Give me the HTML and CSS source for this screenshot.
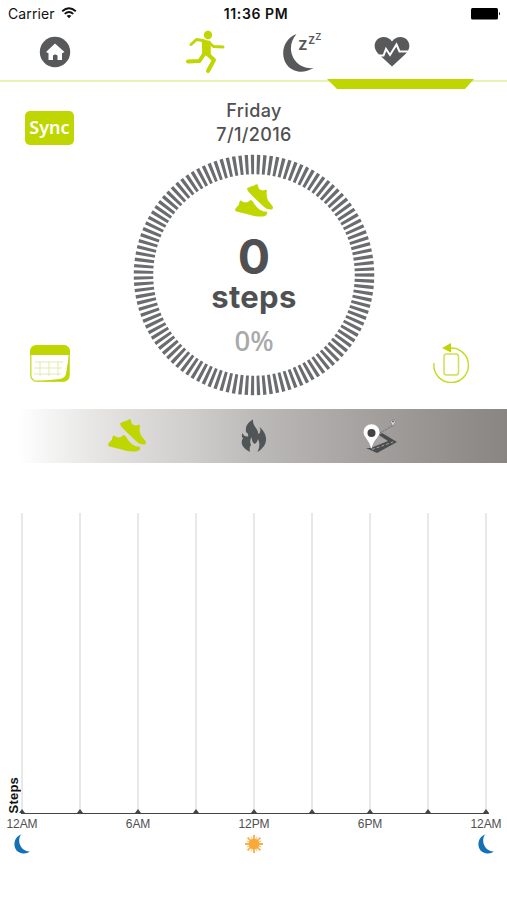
FILE: index.html
```html
<!DOCTYPE html>
<html lang="en">
<head>
    <meta charset="UTF-8">
    <meta name="viewport" content="width=device-width, initial-scale=1.0">
    <title>Steps</title>
    <link rel="stylesheet" href="styles.css">
</head>
<body>
    <!-- shared shapes -->
    <svg class="defs" width="0" height="0">
        <symbol id="shoes" viewBox="0 0 38 34">
            <path d="M12 4.200 L16.500 2.200 Q19 2.200 20.500 .5 L22.500 .3 L24 5 Q27.500 7.500 30.800 5.500 L32 6.500 Q30.800 12 33 16.500 L37.800 22.500 Q38.500 25.500 36 25.600 Q31.500 25.600 28 22 L18 12.500 Q14.500 9 12.800 7 Z"/>
            <path d="M5.500 16.300 Q8.500 19.300 13 18 L15.500 16 L17.500 17 Q20.500 22.500 24.500 25.500 Q27.500 27.800 32 27.800 Q33 30.500 30 32 Q25 33.200 18 31.800 Q10 29.500 1.500 27.500 Q-.5 27 .5 24.500 L4 20.500 Q4 18 5.500 16.300 Z"/>
        </symbol>
        <symbol id="moon" viewBox="0 0 17 20">
            <path d="M7 .5 C-2 4 -1.500 17 7 19 Q12 20.500 16 17.500 C8 18 2 8 7 .5 Z"/>
        </symbol>
    </svg>

    <div class="status">
        <div class="carrier">
            <span>Carrier</span>
            <svg width="16" height="12" viewBox="0 0 16 12">
                <path d="M1.200 4.300 Q8 -1.800 14.800 4.300 M3.700 6.900 Q8 3.200 12.300 6.900" fill="none" stroke="#111" stroke-width="1.900"/>
                <path d="M5.600 8.800 Q8 7 10.400 8.800 L8 11.300 Z" fill="#111"/>
            </svg>
        </div>
        <div class="time">11:36 PM</div>
        <svg class="battery" width="32" height="12" viewBox="0 0 32 12">
            <rect x="0" y="0" width="27" height="11.500" rx="1.500"/>
            <path d="M28 4 Q30 5.700 28 7.500 Z"/>
        </svg>
    </div>

    <nav class="tabs">
        <svg class="home" width="32" height="32" viewBox="0 0 32 32">
            <circle cx="16" cy="16" r="15.200" fill="#58595b"/>
            <path d="M16 7.500 L25.500 16 L23 17.300 V24 H18.500 V19.500 Q16 17.500 14 19.500 V24 H9.500 V17.300 L7 16 Z" fill="#fff"/>
        </svg>
        <svg class="run" width="40" height="44" viewBox="0 0 40 44">
            <circle cx="23" cy="5" r="4.200" fill="#bfd600"/>
            <path d="M18 11 L24.500 12 L24.500 25 L18.500 24 Z" fill="#bfd600" stroke="#bfd600" stroke-width="2.500" stroke-linejoin="round"/>
            <path d="M19 10.800 L11.500 9.500 L6 14.500 M24 12.500 L28.500 16.500 L38 17" fill="none" stroke="#bfd600" stroke-width="3" stroke-linecap="round" stroke-linejoin="round"/>
            <path d="M19 24 L14.500 31 L3 31.500 M22.500 24 L29 30 L23 41" fill="none" stroke="#bfd600" stroke-width="4" stroke-linecap="round" stroke-linejoin="round"/>
        </svg>
        <div class="sleep">
            <svg width="32" height="38" viewBox="0 0 32 38">
                <path d="M13.500 0 C-5 7 -4 34 15 37.500 Q23 38.500 30.500 34 C12 36 .5 15 13.500 0 Z" fill="#58595b"/>
            </svg>
            <span class="z z1">z</span>
            <span class="z z2">z</span>
            <span class="z z3">z</span>
        </div>
        <svg class="heart" width="38" height="32" viewBox="0 0 38 32">
            <path d="M19 30.500 L5 17.500 C-2 10 3 1 10.500 1 Q16 1 19 5.500 Q22 1 27.500 1 C35 1 40 10 33 17.500 Z" fill="#58595b"/>
            <path d="M6 19.500 L10.500 19.500 L13 13 L17 19 L23.500 8.500 L26.500 15.500 L38 15.500" fill="none" stroke="#fff" stroke-width="2"/>
        </svg>
    </nav>

    <div class="divider">
        <svg width="147" height="10" viewBox="0 0 147 10"><path d="M0 0 H147 L138 10 H10 Z" fill="#bfd600"/></svg>
    </div>

    <main>
        <section class="summary">
            <div class="side">
                <div class="sync">Sync</div>
                <svg width="40" height="37" viewBox="0 0 40 37">
                    <rect x=".8" y=".8" width="38.400" height="35.400" rx="6" fill="#fff" stroke="#c9dc36" stroke-width="1.400"/>
                    <path d="M0 10 V7 Q0 0 7 0 H33 Q40 0 40 7 V10 Z" fill="#bfd600"/>
                    <path d="M39 10 V30 Q39 36 33 36 H10 L30 34 Q35 33 36 29 Z" fill="#bfd600"/>
                    <path d="M5 17 H33 M4 23 H32 M4 29 H31 M10 16 V31 M19 16 V31 M28 16 V31" fill="none" stroke="#e2ebb0" stroke-width="1"/>
                </svg>
            </div>
            <div class="center">
                <div class="date">Friday<br>7/1/2016</div>
                <div class="dial">
                    <svg class="ring" width="242" height="242" viewBox="0 0 242 242">
                        <circle cx="121" cy="121" r="110.500" pathLength="1190" transform="rotate(-.8 121 121)"/>
                    </svg>
                    <svg class="shoes" width="38" height="34"><use href="#shoes"/></svg>
                    <div class="count">0</div>
                    <div class="unit">steps</div>
                    <div class="percent">0%</div>
                </div>
            </div>
            <div class="side right">
                <svg width="38" height="40" viewBox="0 0 38 40">
                    <path d="M2 20 A17.300 17.300 0 1 0 18 5" fill="none" stroke="#c5da23" stroke-width="1.400"/>
                    <path d="M10 5 L19 0 V9.500 Z" fill="#bfd600"/>
                    <rect x="12" y="11" width="14.500" height="21" rx="2.500" fill="none" stroke="#d0e051" stroke-width="1.500"/>
                </svg>
            </div>
        </section>

        <section class="metrics">
            <svg class="m-steps" width="38" height="34"><use href="#shoes"/></svg>
            <svg class="m-fire" width="26" height="34" viewBox="0 0 26 34">
                <path d="M12 .5 C11 7 18 10 17 15 Q21 13 18.500 8 C25 13 27 21 23 27 Q20 31 16.500 33 Q20 26 17 20 Q16 24 13.500 25 Q10 22 11 18 Q8 21 10 26 Q8 28 9 33 C1 29 -1 24 2 19 Q0 18 1.500 14 Q3 18 7 17.500 Q8 15 5 13 C4 6 8 3 12 .5 Z" fill="#505557"/>
            </svg>
            <svg class="m-route" width="34" height="36" viewBox="0 0 34 36">
                <path d="M3 29 L14 34 L34 23 L19 14 L16 16 L25 22 L8 29 Z" fill="#4b4c4e"/>
                <path d="M10 27 L24 22 L16 18 Z" fill="#a9a6a5"/>
                <path d="M9 30.500 L30 23" stroke="#bbb" stroke-width=".8" stroke-dasharray="3 2"/>
                <path d="M17 14 L29 7" stroke="#666" stroke-width=".8" stroke-dasharray="2 1"/>
                <path d="M8.500 30 Q7 24 3 19 A8 8 0 1 1 14 19 Q9.500 24 8.500 30 Z" fill="#fff"/>
                <circle cx="8.500" cy="14" r="4" fill="#414345"/>
                <path d="M30 7.500 L27.500 3 Q30 -1.500 32.500 3 Z" fill="#ddd" stroke="#777" stroke-width=".7"/>
                <circle cx="30" cy="2.500" r="1" fill="#666"/>
            </svg>
        </section>

        <section class="chart">
            <div class="y-label">Steps</div>
            <div class="plot">
                <div class="col"></div><div class="col"></div><div class="col"></div><div class="col"></div>
                <div class="col"></div><div class="col"></div><div class="col"></div><div class="col"></div>
                <div class="col last"></div>
            </div>
        </section>
        <div class="axis">
            <div>12AM<svg class="night" width="17" height="20"><use href="#moon"/></svg></div>
            <div>6AM</div>
            <div>12PM
                <svg class="sun" width="20" height="20" viewBox="0 0 20 20">
                    <path d="M10 1 V19 M1 10 H19 M3.600 3.600 L16.400 16.400 M16.400 3.600 L3.600 16.400" stroke="#f9b04a" stroke-width="1.800"/>
                    <path d="M7 2.800 L13 17.200 M13 2.800 L7 17.200 M2.800 7 L17.200 13 M17.200 7 L2.800 13" stroke="#f9b04a" stroke-width=".8"/>
                    <circle cx="10" cy="10" r="5.400" fill="#f9a938"/>
                </svg>
            </div>
            <div>6PM</div>
            <div>12AM<svg class="night" width="17" height="20"><use href="#moon"/></svg></div>
        </div>
    </main>
</body>
</html>
```
FILE: styles.css
```css
* {
    box-sizing: border-box;
}

body {
    margin: 0;
    width: 507px;
    height: 900px;
    overflow: hidden;
    background-color: #fff;
    font-family: Inter, "Liberation Sans", sans-serif;
    color: #505052;
}

svg {
    display: block;
    flex: none;
}

.defs {
    position: absolute;
}

.status {
    height: 28px;
    padding: 0 7px 0 8px;
    display: grid;
    grid-template-columns: 1fr auto 1fr;
    align-items: center;
    color: #111;
    font-size: 14px;
}

.carrier {
    display: flex;
    align-items: center;
    gap: 6px;
    letter-spacing: 0.1px;
    margin-top: -2px;
}

.carrier svg {
    margin-top: -1px;
}

.time {
    font-weight: 600;
    font-size: 14px;
    letter-spacing: 0.6px;
    margin-left: 4px;
    margin-top: -2px;
}

.battery {
    justify-self: end;
    margin-right: -3px;
    margin-top: -1px;
}

.tabs {
    height: 50px;
    display: flex;
    align-items: flex-start;
    padding-left: 39px;
}

.home {
    margin-top: 8px;
}

.run {
    margin: 2px 0 0 114px;
}

.sleep {
    position: relative;
    margin: 6px 0 0 58px;
    width: 40px;
}

.z {
    position: absolute;
    line-height: 1;
    font-weight: 600;
    color: #58595b;
}

.z1 {
    left: 15px;
    top: 2px;
    font-size: 17px;
}

.z2 {
    left: 25px;
    top: -1px;
    font-size: 13px;
    font-weight: 500;
}

.z3 {
    left: 32px;
    top: -4px;
    font-size: 12px;
    font-weight: 400;
}

.heart {
    margin: 8px 0 0 50px;
}

.divider {
    height: 11px;
    padding-left: 327px;
    background: linear-gradient(#fff 0, #fff 1px, #e6f0ac 1px, #edf4c2 3px, transparent 3px);
}

.divider svg {
    margin-top: 1px;
}

.summary {
    height: 319px;
    display: flex;
    justify-content: space-between;
    padding: 0 37px 0 25px;
}

.side {
    width: 50px;
    padding-top: 21px;
}

.sync {
    width: 49px;
    height: 34px;
    line-height: 32px;
    border-radius: 5px;
    background-color: #bfd600;
    color: #fff;
    text-align: center;
    font-family: "Noto Sans", sans-serif;
    font-weight: 600;
    font-size: 18px;
    margin-bottom: 200px;
}

.side > svg {
    margin-left: 5px;
}

.side.right {
    width: 38px;
    padding-top: 253px;
}

.side.right > svg {
    margin-left: 0;
}

.center {
    width: 242px;
    margin-left: 1px;
    display: flex;
    flex-direction: column;
}

.date {
    height: 64px;
    padding-top: 9px;
    text-align: center;
    font-weight: 500;
    font-size: 18px;
    line-height: 24px;
    letter-spacing: 0.35px;
}

.dial {
    position: relative;
    height: 242px;
    padding-top: 30px;
    display: flex;
    flex-direction: column;
    align-items: center;
}

.ring {
    position: absolute;
    left: 0;
    top: 0;
}

.ring circle {
    fill: none;
    stroke: #6b6c6f;
    stroke-width: 19.500px;
    stroke-dasharray: 5.400 4.600;
}

.shoes {
    fill: #bfd600;
}

.count {
    font-weight: 700;
    font-size: 48px;
    line-height: 40px;
    margin-top: 19px;
}

.unit {
    font-weight: 700;
    font-size: 31px;
    line-height: 32px;
    margin-top: 4px;
    letter-spacing: 0.3px;
}

.percent {
    font-family: "Noto Sans", sans-serif;
    font-weight: 500;
    font-size: 27.5px;
    line-height: 30px;
    color: #a9a9a9;
    margin-top: 13px;
}

.metrics {
    height: 54px;
    display: flex;
    align-items: flex-start;
    padding: 10px 0 0 108px;
    background: linear-gradient(to right, #fff 0, #fff 18px, #e5e4e3 100px, #d0cecd 190px, #bbb9b8 260px, #a19e9c 380px, #888583 507px);
}

.m-steps {
    fill: #bfd600;
}

.m-fire {
    margin-left: 95px;
}

.m-route {
    margin-left: 96px;
}

.chart {
    height: 351px;
    padding: 50px 0 0 6px;
    display: flex;
    align-items: flex-end;
}

.y-label {
    width: 15px;
    margin-bottom: 1px;
    writing-mode: vertical-rl;
    transform: rotate(180deg);
    font-family: "Liberation Sans", sans-serif;
    font-weight: 700;
    font-size: 13px;
    line-height: 15px;
    letter-spacing: 0.2px;
    color: #111;
}

.plot {
    width: 468px;
    height: 301px;
    display: flex;
    border-bottom: 1px solid #444;
}

.col {
    position: relative;
    width: 58px;
    border-left: 2px solid #e8e8e8;
}

.col.last {
    width: 4px;
}

/* tick mark on the axis */
.col::after {
    content: "";
    position: absolute;
    left: -4px;
    bottom: 0;
    border-left: 3px solid transparent;
    border-right: 3px solid transparent;
    border-bottom: 4px solid #444;
}

.axis {
    display: flex;
    justify-content: space-between;
    padding: 3px 0 0 0;
    margin: 0 -15px 0 -14px;
    font-family: "Liberation Sans", sans-serif;
    font-size: 12px;
    line-height: 14px;
    letter-spacing: -0.1px;
}

.axis div {
    width: 72px;
    display: flex;
    flex-direction: column;
    align-items: center;
}

.night {
    margin-top: 3px;
    fill: #1670b5;
}

.sun {
    margin-top: 3px;
}
```
